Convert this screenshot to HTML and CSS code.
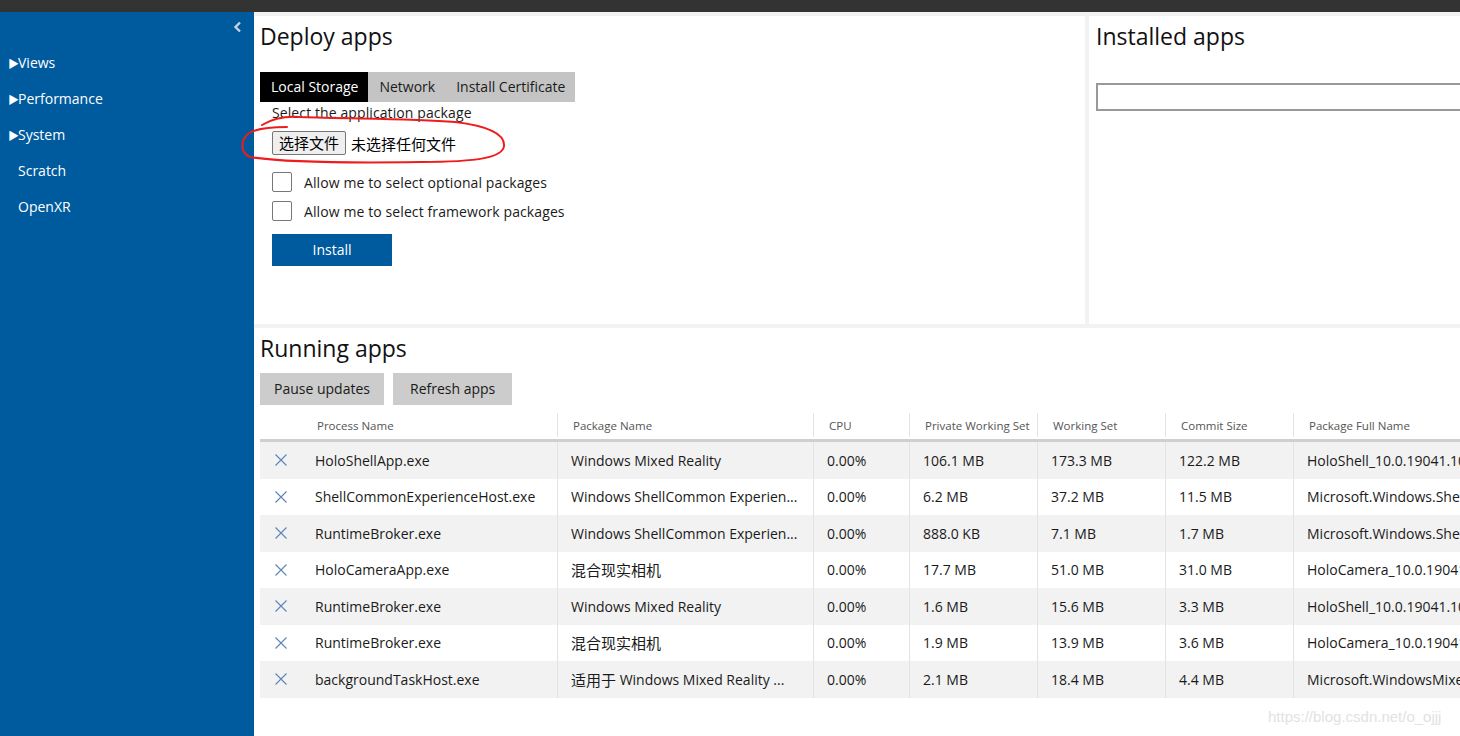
FILE: index.html
```html
<!DOCTYPE html>
<html>
<head>
<meta charset="utf-8">
<link rel="stylesheet" href="styles.css">
</head>
<body>
<div class="topbar"></div>
<div class="shell">
  <nav class="sidebar">
    <div class="collapse">
      <svg width="9" height="12" viewBox="0 0 9 12"><polyline points="7,1.5 2.5,6 7,10.5" fill="none" stroke="#c8d2dc" stroke-width="2.4"/></svg>
    </div>
    <ul class="menu">
      <li><span class="tri">▶</span>Views</li>
      <li><span class="tri">▶</span>Performance</li>
      <li><span class="tri">▶</span>System</li>
      <li class="plain">Scratch</li>
      <li class="plain">OpenXR</li>
    </ul>
  </nav>
  <main class="main">
    <div class="top-row">
      <section class="panel deploy">
        <h2 class="title">Deploy apps</h2>
        <div class="tabs">
          <span class="tab active">Local Storage</span>
          <span class="tab">Network</span>
          <span class="tab">Install Certificate</span>
        </div>
        <div class="form">
          <div class="label">Select the application package</div>
          <div class="file-row">
            <span class="file-btn zh">选择文件</span>
            <span class="file-none zh">未选择任何文件</span>
          </div>
          <label class="check"><span class="box"></span>Allow me to select optional packages</label>
          <label class="check"><span class="box"></span>Allow me to select framework packages</label>
          <div class="install">Install</div>
        </div>
      </section>
      <section class="panel installed">
        <h2 class="title">Installed apps</h2>
        <div class="select-box"></div>
      </section>
    </div>
    <section class="panel running">
      <h2 class="title">Running apps</h2>
      <div class="actions">
        <span class="btn">Pause updates</span>
        <span class="btn">Refresh apps</span>
      </div>
      <div class="table">
        <div class="row head">
          <div class="cell first">Process Name</div>
          <div class="cell">Package Name</div>
          <div class="cell">CPU</div>
          <div class="cell">Private Working Set</div>
          <div class="cell">Working Set</div>
          <div class="cell">Commit Size</div>
          <div class="cell">Package Full Name</div>
        </div>
        <div class="row alt">
          <div class="cell first"><svg class="x" width="12" height="12" viewBox="0 0 12 12"><path d="M0.5 0.5L11.5 11.5M11.5 0.5L0.5 11.5" stroke="#5a85b8" stroke-width="1.1"/></svg>HoloShellApp.exe</div>
          <div class="cell">Windows Mixed Reality</div>
          <div class="cell">0.00%</div>
          <div class="cell">106.1 MB</div>
          <div class="cell">173.3 MB</div>
          <div class="cell">122.2 MB</div>
          <div class="cell">HoloShell_10.0.19041.1023_neutral__cw5n1h2txyewy</div>
        </div>
        <div class="row">
          <div class="cell first"><svg class="x" width="12" height="12" viewBox="0 0 12 12"><path d="M0.5 0.5L11.5 11.5M11.5 0.5L0.5 11.5" stroke="#5a85b8" stroke-width="1.1"/></svg>ShellCommonExperienceHost.exe</div>
          <div class="cell">Windows ShellCommon Experien...</div>
          <div class="cell">0.00%</div>
          <div class="cell">6.2 MB</div>
          <div class="cell">37.2 MB</div>
          <div class="cell">11.5 MB</div>
          <div class="cell">Microsoft.Windows.ShellCommonExperienceHost</div>
        </div>
        <div class="row alt">
          <div class="cell first"><svg class="x" width="12" height="12" viewBox="0 0 12 12"><path d="M0.5 0.5L11.5 11.5M11.5 0.5L0.5 11.5" stroke="#5a85b8" stroke-width="1.1"/></svg>RuntimeBroker.exe</div>
          <div class="cell">Windows ShellCommon Experien...</div>
          <div class="cell">0.00%</div>
          <div class="cell">888.0 KB</div>
          <div class="cell">7.1 MB</div>
          <div class="cell">1.7 MB</div>
          <div class="cell">Microsoft.Windows.ShellCommonExperienceHost</div>
        </div>
        <div class="row">
          <div class="cell first"><svg class="x" width="12" height="12" viewBox="0 0 12 12"><path d="M0.5 0.5L11.5 11.5M11.5 0.5L0.5 11.5" stroke="#5a85b8" stroke-width="1.1"/></svg>HoloCameraApp.exe</div>
          <div class="cell"><span class="zh">混合现实相机</span></div>
          <div class="cell">0.00%</div>
          <div class="cell">17.7 MB</div>
          <div class="cell">51.0 MB</div>
          <div class="cell">31.0 MB</div>
          <div class="cell">HoloCamera_10.0.19041.1023_neutral</div>
        </div>
        <div class="row alt">
          <div class="cell first"><svg class="x" width="12" height="12" viewBox="0 0 12 12"><path d="M0.5 0.5L11.5 11.5M11.5 0.5L0.5 11.5" stroke="#5a85b8" stroke-width="1.1"/></svg>RuntimeBroker.exe</div>
          <div class="cell">Windows Mixed Reality</div>
          <div class="cell">0.00%</div>
          <div class="cell">1.6 MB</div>
          <div class="cell">15.6 MB</div>
          <div class="cell">3.3 MB</div>
          <div class="cell">HoloShell_10.0.19041.1023_neutral__cw5n1h2txyewy</div>
        </div>
        <div class="row">
          <div class="cell first"><svg class="x" width="12" height="12" viewBox="0 0 12 12"><path d="M0.5 0.5L11.5 11.5M11.5 0.5L0.5 11.5" stroke="#5a85b8" stroke-width="1.1"/></svg>RuntimeBroker.exe</div>
          <div class="cell"><span class="zh">混合现实相机</span></div>
          <div class="cell">0.00%</div>
          <div class="cell">1.9 MB</div>
          <div class="cell">13.9 MB</div>
          <div class="cell">3.6 MB</div>
          <div class="cell">HoloCamera_10.0.19041.1023_neutral</div>
        </div>
        <div class="row alt">
          <div class="cell first"><svg class="x" width="12" height="12" viewBox="0 0 12 12"><path d="M0.5 0.5L11.5 11.5M11.5 0.5L0.5 11.5" stroke="#5a85b8" stroke-width="1.1"/></svg>backgroundTaskHost.exe</div>
          <div class="cell"><span class="zh">适用于</span>&nbsp;Windows Mixed Reality ...</div>
          <div class="cell">0.00%</div>
          <div class="cell">2.1 MB</div>
          <div class="cell">18.4 MB</div>
          <div class="cell">4.4 MB</div>
          <div class="cell">Microsoft.WindowsMixedReality</div>
        </div>
      </div>
    </section>
  </main>
</div>
<svg class="annot" width="1460" height="736" viewBox="0 0 1460 736">
  <path d="M262 125 C 272 119, 285 116, 300 117 C 350 119, 410 118, 455 122 C 488 126, 505 134, 504 146 C 503 157, 480 162, 420 162 C 350 163, 280 162, 250 157 C 240 153, 240 140, 249 133 C 258 128, 272 127, 287 127" fill="none" stroke="#ee1c1c" stroke-width="2" stroke-linecap="round"/>
</svg>
<div class="watermark">https://blog.csdn.net/o_ojjj</div>
</body>
</html>
```

FILE: styles.css
```css
* { box-sizing: border-box; }
html, body { margin: 0; padding: 0; }
body {
  width: 1460px;
  height: 736px;
  overflow: hidden;
  background: #f2f2f2;
  font-family: "Open Sans", "Noto Sans CJK SC", sans-serif;
  font-size: 14px;
  color: #1a1a1a;
  position: relative;
}
.zh { font-family: "Noto Sans CJK SC", sans-serif; font-size: 15px; }
.topbar { height: 12px; background: #333333; }
.shell { display: flex; height: 724px; }
.sidebar {
  width: 254px;
  flex: none;
  background: #005a9e;
  color: #ffffff;
}
.collapse {
  height: 33px;
  display: flex;
  justify-content: flex-end;
  align-items: center;
  padding-right: 12px;
  padding-bottom: 3px;
}
.menu { list-style: none; margin: 0; padding: 0; }
.menu li {
  height: 36px;
  line-height: 36px;
  padding-left: 8px;
  font-size: 14px;
}
.menu li.plain { padding-left: 18px; }
.tri { font-size: 11px; display: inline-block; width: 10px; }
.main {
  flex: 1;
  display: flex;
  flex-direction: column;
  gap: 4px;
  padding-top: 4px;
  overflow: hidden;
  min-width: 0;
}
.top-row { display: flex; gap: 4px; height: 308px; flex: none; }
.panel { background: #ffffff; }
.deploy { width: 831px; flex: none; padding: 0 6px; }
.installed { width: 520px; flex: none; padding: 0 7px; }
.title {
  margin: 0;
  font-weight: 400;
  font-size: 23px;
  line-height: 32px;
  padding-top: 4px;
  color: #111;
}
.tabs { display: flex; margin-top: 20px; height: 30px; }
.tab {
  background: #c4c4c4;
  line-height: 30px;
  padding: 0 10px 0 11px;
  font-size: 14px;
  color: #1a1a1a;
}
.tab.active { background: #000; color: #fff; }
.form { padding-left: 12px; }
.label { line-height: 22px; margin-top: 0; letter-spacing: 0.1px; }
.file-row { display: flex; align-items: center; gap: 5px; margin-top: 7px; height: 24px; }
.file-btn {
  background: #efefef;
  border: 1px solid #767676;
  border-radius: 2px;
  height: 24px;
  line-height: 22px;
  padding: 0 6px;
  color: #000;
}
.file-none { color: #000; }
.check { display: flex; align-items: center; gap: 12px; height: 20px; margin-top: 0; letter-spacing: 0.1px; }
.file-row + .check { margin-top: 17px; }
.check + .check { margin-top: 9px; }
.box {
  width: 20px; height: 20px;
  border: 1px solid #777;
  border-radius: 2px;
  background: #fff;
}
.install {
  margin-top: 13px;
  width: 120px;
  height: 32px;
  line-height: 32px;
  text-align: center;
  background: #005a9e;
  color: #fff;
}
.select-box {
  margin-top: 31px;
  height: 28px;
  border: 2px solid #999;
  width: 600px;
}
.running { flex: 1; padding: 0 0 0 6px; }
.actions { display: flex; gap: 9px; margin-top: 9px; }
.btn {
  background: #cccccc;
  height: 32px;
  line-height: 32px;
  padding: 0 14px;
  color: #1a1a1a;
}
.btn + .btn { padding: 0 17px; }
.table { margin-top: 8px; width: 1400px; }
.row {
  display: grid;
  grid-template-columns: 297px 256px 96px 128px 128px 128px 256px;
  height: 36.5px;
  align-items: stretch;
}
.row.alt { background: #f2f2f2; }
.cell {
  border-left: 1px solid #e3e3e3;
  padding-left: 13px;
  white-space: nowrap;
  overflow: hidden;
  display: flex;
  align-items: center;
}
.cell.first { border-left: none; padding-left: 15px; }
.x { margin-right: 28px; flex: none; }
.row.head {
  height: 29px;
  font-size: 11.5px;
  color: #555;
  border-bottom: 3px solid #cfcfcf;
  padding-bottom: 2px;
}
.row.head .cell { padding-left: 15px; }
.row.head .cell.first { padding-left: 57px; }
.annot { position: absolute; left: 0; top: 0; pointer-events: none; }
.watermark {
  position: absolute;
  left: 1268px;
  top: 708px;
  font-family: "Liberation Sans", sans-serif;
  font-size: 15px;
  color: #e2e2e2;
}
```
